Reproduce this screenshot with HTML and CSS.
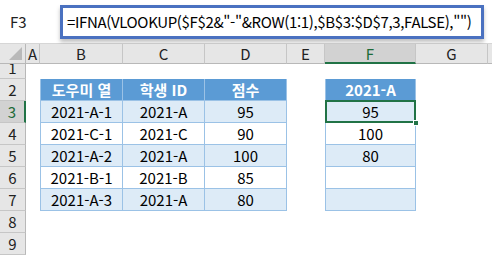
FILE: index.html
```html
<!DOCTYPE html>
<html lang="ko">
<head>
    <meta charset="UTF-8">
    <title>IFNA VLOOKUP</title>
    <link rel="stylesheet" href="styles.css">
</head>
<body>
    <div class="topbar">
        <div class="namebox">F3</div>
        <div class="formula">=IFNA(VLOOKUP($F$2&amp;"-"&amp;ROW(1:1),$B$3:$D$7,3,FALSE),"")</div>
    </div>

    <div class="sheet">
        <!-- column headers -->
        <div class="corner"><span class="tri"></span></div>
        <div class="colhead">A</div>
        <div class="colhead">B</div>
        <div class="colhead">C</div>
        <div class="colhead">D</div>
        <div class="colhead">E</div>
        <div class="colhead on">F</div>
        <div class="colhead">G</div>
        <div class="colhead last"></div>

        <!-- row 1 -->
        <div class="rowhead short"><span>1</span></div>
        <div></div><div></div><div></div><div></div><div></div><div></div><div></div><div></div>

        <!-- row 2 -->
        <div class="rowhead">2</div>
        <div></div>
        <div class="tc th first">도우미 열</div>
        <div class="tc th">학생 ID</div>
        <div class="tc th">점수</div>
        <div></div>
        <div class="tc th first">2021-A</div>
        <div></div><div></div>

        <!-- row 3 -->
        <div class="rowhead on">3</div>
        <div></div>
        <div class="tc band first">2021-A-1</div>
        <div class="tc band">2021-A</div>
        <div class="tc band">95</div>
        <div></div>
        <div class="tc band first selected">95<span class="handle"></span></div>
        <div></div><div></div>

        <!-- row 4 -->
        <div class="rowhead">4</div>
        <div></div>
        <div class="tc first">2021-C-1</div>
        <div class="tc">2021-C</div>
        <div class="tc">90</div>
        <div></div>
        <div class="tc first">100</div>
        <div></div><div></div>

        <!-- row 5 -->
        <div class="rowhead">5</div>
        <div></div>
        <div class="tc band first">2021-A-2</div>
        <div class="tc band">2021-A</div>
        <div class="tc band">100</div>
        <div></div>
        <div class="tc band first">80</div>
        <div></div><div></div>

        <!-- row 6 -->
        <div class="rowhead">6</div>
        <div></div>
        <div class="tc first">2021-B-1</div>
        <div class="tc">2021-B</div>
        <div class="tc">85</div>
        <div></div>
        <div class="tc first"></div>
        <div></div><div></div>

        <!-- row 7 -->
        <div class="rowhead">7</div>
        <div></div>
        <div class="tc band first">2021-A-3</div>
        <div class="tc band">2021-A</div>
        <div class="tc band">80</div>
        <div></div>
        <div class="tc band first"></div>
        <div></div><div></div>

        <!-- rows 8, 9 -->
        <div class="rowhead">8</div>
        <div></div><div></div><div></div><div></div><div></div><div></div><div></div><div></div>
        <div class="rowhead">9</div>
        <div></div><div></div><div></div><div></div><div></div><div></div><div></div><div></div>
    </div>
</body>
</html>
```

FILE: styles.css
```css
* {
    margin: 0;
    padding: 0;
    box-sizing: border-box;
}

body {
    width: 492px;
    height: 256px;
    overflow: hidden;
    background: #ffffff;
    font-family: 'Noto Sans CJK KR', 'Noto Sans', sans-serif;
    font-size: 15px;
    color: #000000;
}

/* formula bar */
.topbar {
    height: 44px;
    display: flex;
    align-items: center;
    background: #ffffff;
    border-bottom: 1px solid #d6d6d6;
}

.namebox {
    width: 60px;
    height: 30px;
    padding-left: 10px;
    line-height: 30px;
    color: #222222;
}

.formula {
    flex: 1;
    height: 34px;
    margin-right: 8px;
    padding-left: 4px;
    line-height: 28px;
    letter-spacing: -0.35px;
    border: 3px solid #4a71c0;
    box-shadow: 0 3px 4px rgba(0, 0, 0, 0.25);
    white-space: nowrap;
    overflow: hidden;
}

/* grid */
.sheet {
    display: grid;
    grid-template-columns: 26px 14px 83px 82px 82px 38px 91px 72px 1fr;
    grid-template-rows: 20px 15px repeat(8, 22px);
}

.corner {
    position: relative;
    background: #e6e6e6;
    border-right: 1px solid #b8b8b8;
    border-bottom: 1px solid #b8b8b8;
}

.tri {
    position: absolute;
    right: 3px;
    bottom: 3px;
    width: 0;
    height: 0;
    border-left: 13px solid transparent;
    border-bottom: 13px solid #b9b9b9;
}

.colhead {
    background: #e6e6e6;
    border-right: 1px solid #c6c6c6;
    border-bottom: 1px solid #b8b8b8;
    display: flex;
    align-items: center;
    justify-content: center;
    color: #222222;
}

.colhead.on {
    background: #d2d2d2;
    border-bottom: 2px solid #217346;
    color: #1d6a38;
}

.colhead.last {
    border-right: none;
}

.rowhead {
    background: #e6e6e6;
    border-right: 1px solid #b8b8b8;
    border-bottom: 1px solid #c6c6c6;
    display: flex;
    align-items: center;
    justify-content: center;
    color: #222222;
}

.rowhead.on {
    background: #d2d2d2;
    border-right: 2px solid #217346;
    color: #1d6a38;
}

.rowhead.short {
    overflow: hidden;
    align-items: flex-start;
}

.rowhead.short span {
    height: 15px;
    margin-top: -4px;
    line-height: 15px;
}

/* table cells */
.tc {
    border-right: 1px solid #9bc2e6;
    border-bottom: 1px solid #9bc2e6;
    display: flex;
    align-items: center;
    justify-content: center;
}

.tc.first {
    border-left: 1px solid #9bc2e6;
}

.th {
    background: #5b9bd5;
    color: #ffffff;
    font-weight: bold;
}

.band {
    background: #ddebf7;
}

.selected {
    position: relative;
}

.selected::after {
    content: "";
    position: absolute;
    left: -1px;
    top: -1px;
    right: -1px;
    bottom: -1px;
    border: 2px solid #217346;
}

.handle {
    position: absolute;
    right: -4px;
    bottom: -4px;
    width: 6px;
    height: 6px;
    background: #217346;
    border: 1px solid #ffffff;
    z-index: 1;
}
```
